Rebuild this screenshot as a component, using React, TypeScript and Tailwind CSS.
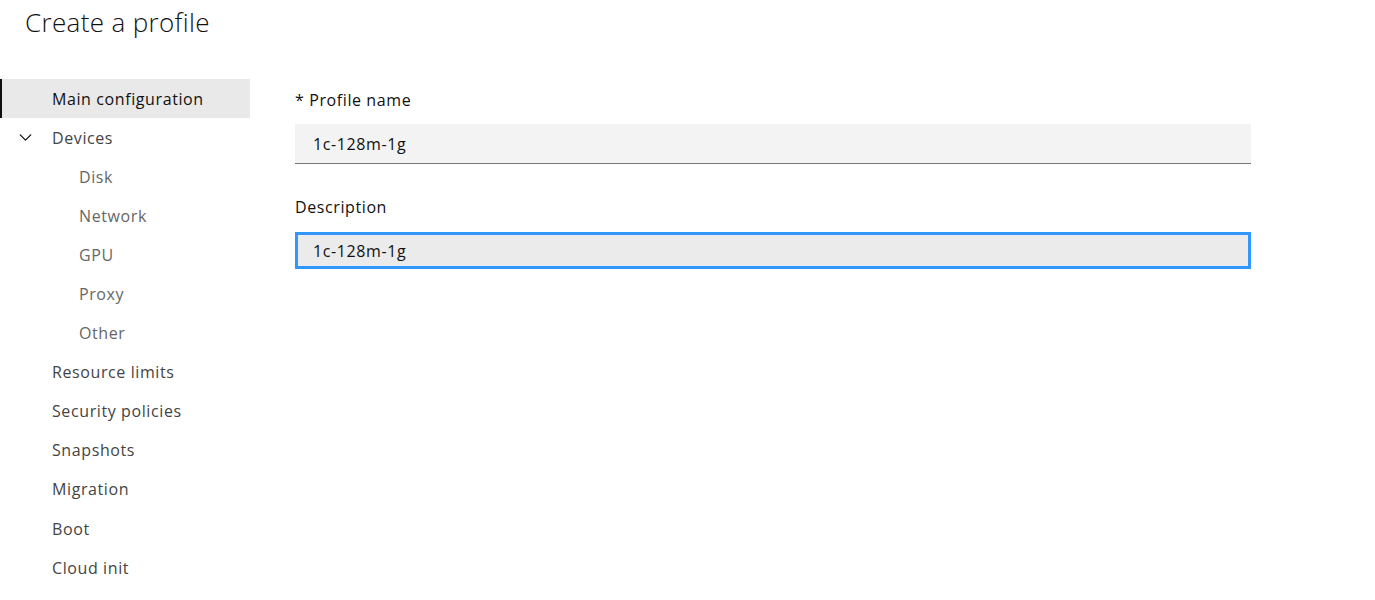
import { ChevronDown } from "lucide-react";

const font = { fontFamily: '"Open Sans", "Noto Sans", sans-serif' };

type NavItem = { label: string; sub?: boolean; active?: boolean; caret?: boolean };

const items: NavItem[] = [
  { label: "Main configuration", active: true },
  { label: "Devices", caret: true },
  { label: "Disk", sub: true },
  { label: "Network", sub: true },
  { label: "GPU", sub: true },
  { label: "Proxy", sub: true },
  { label: "Other", sub: true },
  { label: "Resource limits" },
  { label: "Security policies" },
  { label: "Snapshots" },
  { label: "Migration" },
  { label: "Boot" },
  { label: "Cloud init" },
];

const Sidebar = () => (
  <nav className="w-[250px] shrink-0 flex flex-col">
    {items.map((it) => (
      <div
        key={it.label}
        className={
          "h-[39.1px] flex items-center text-[16px] tracking-[0.6px] relative " +
          (it.active ? "bg-[#e9e9e9] text-[#111]" : it.sub ? "text-[#666]" : "text-[#444]")
        }
      >
        {it.active && <span className="absolute left-0 top-0 bottom-0 w-[2px] bg-[#111]" />}
        {it.caret && (
          <ChevronDown className="absolute left-[15px] top-[9px] w-[21px] h-[21px] text-[#111]" strokeWidth={1.5} />
        )}
        <span className={it.sub ? "pl-[79px]" : "pl-[52px]"}>{it.label}</span>
      </div>
    ))}
  </nav>
);

export default function App() {
  return (
    <div className="min-h-screen bg-white text-[#111]" style={font}>
      <h1 className="pl-[25px] pt-[4px] text-[26px] font-light tracking-[0.35px] text-[#111] leading-[36px]">
        Create a profile
      </h1>
      <div className="flex mt-[39px]">
        <Sidebar />
        <main className="ml-[45px] w-[956px] flex flex-col text-[16px] tracking-[0.6px]">
          <label className="leading-[24px] mt-[9px] text-[#111]">* Profile name</label>
          <div className="mt-[12px] h-[40px] bg-[#f3f3f3] border-b border-[#777] flex items-center px-[18px]">
            1c-128m-1g
          </div>
          <label className="leading-[24px] mt-[31px] text-[#111]">Description</label>
          <div className="mt-[13px] h-[37px] bg-[#ebebeb] border-[3px] border-[#3197fc] flex items-center px-[15px]">
            1c-128m-1g
          </div>
        </main>
      </div>
    </div>
  );
}
